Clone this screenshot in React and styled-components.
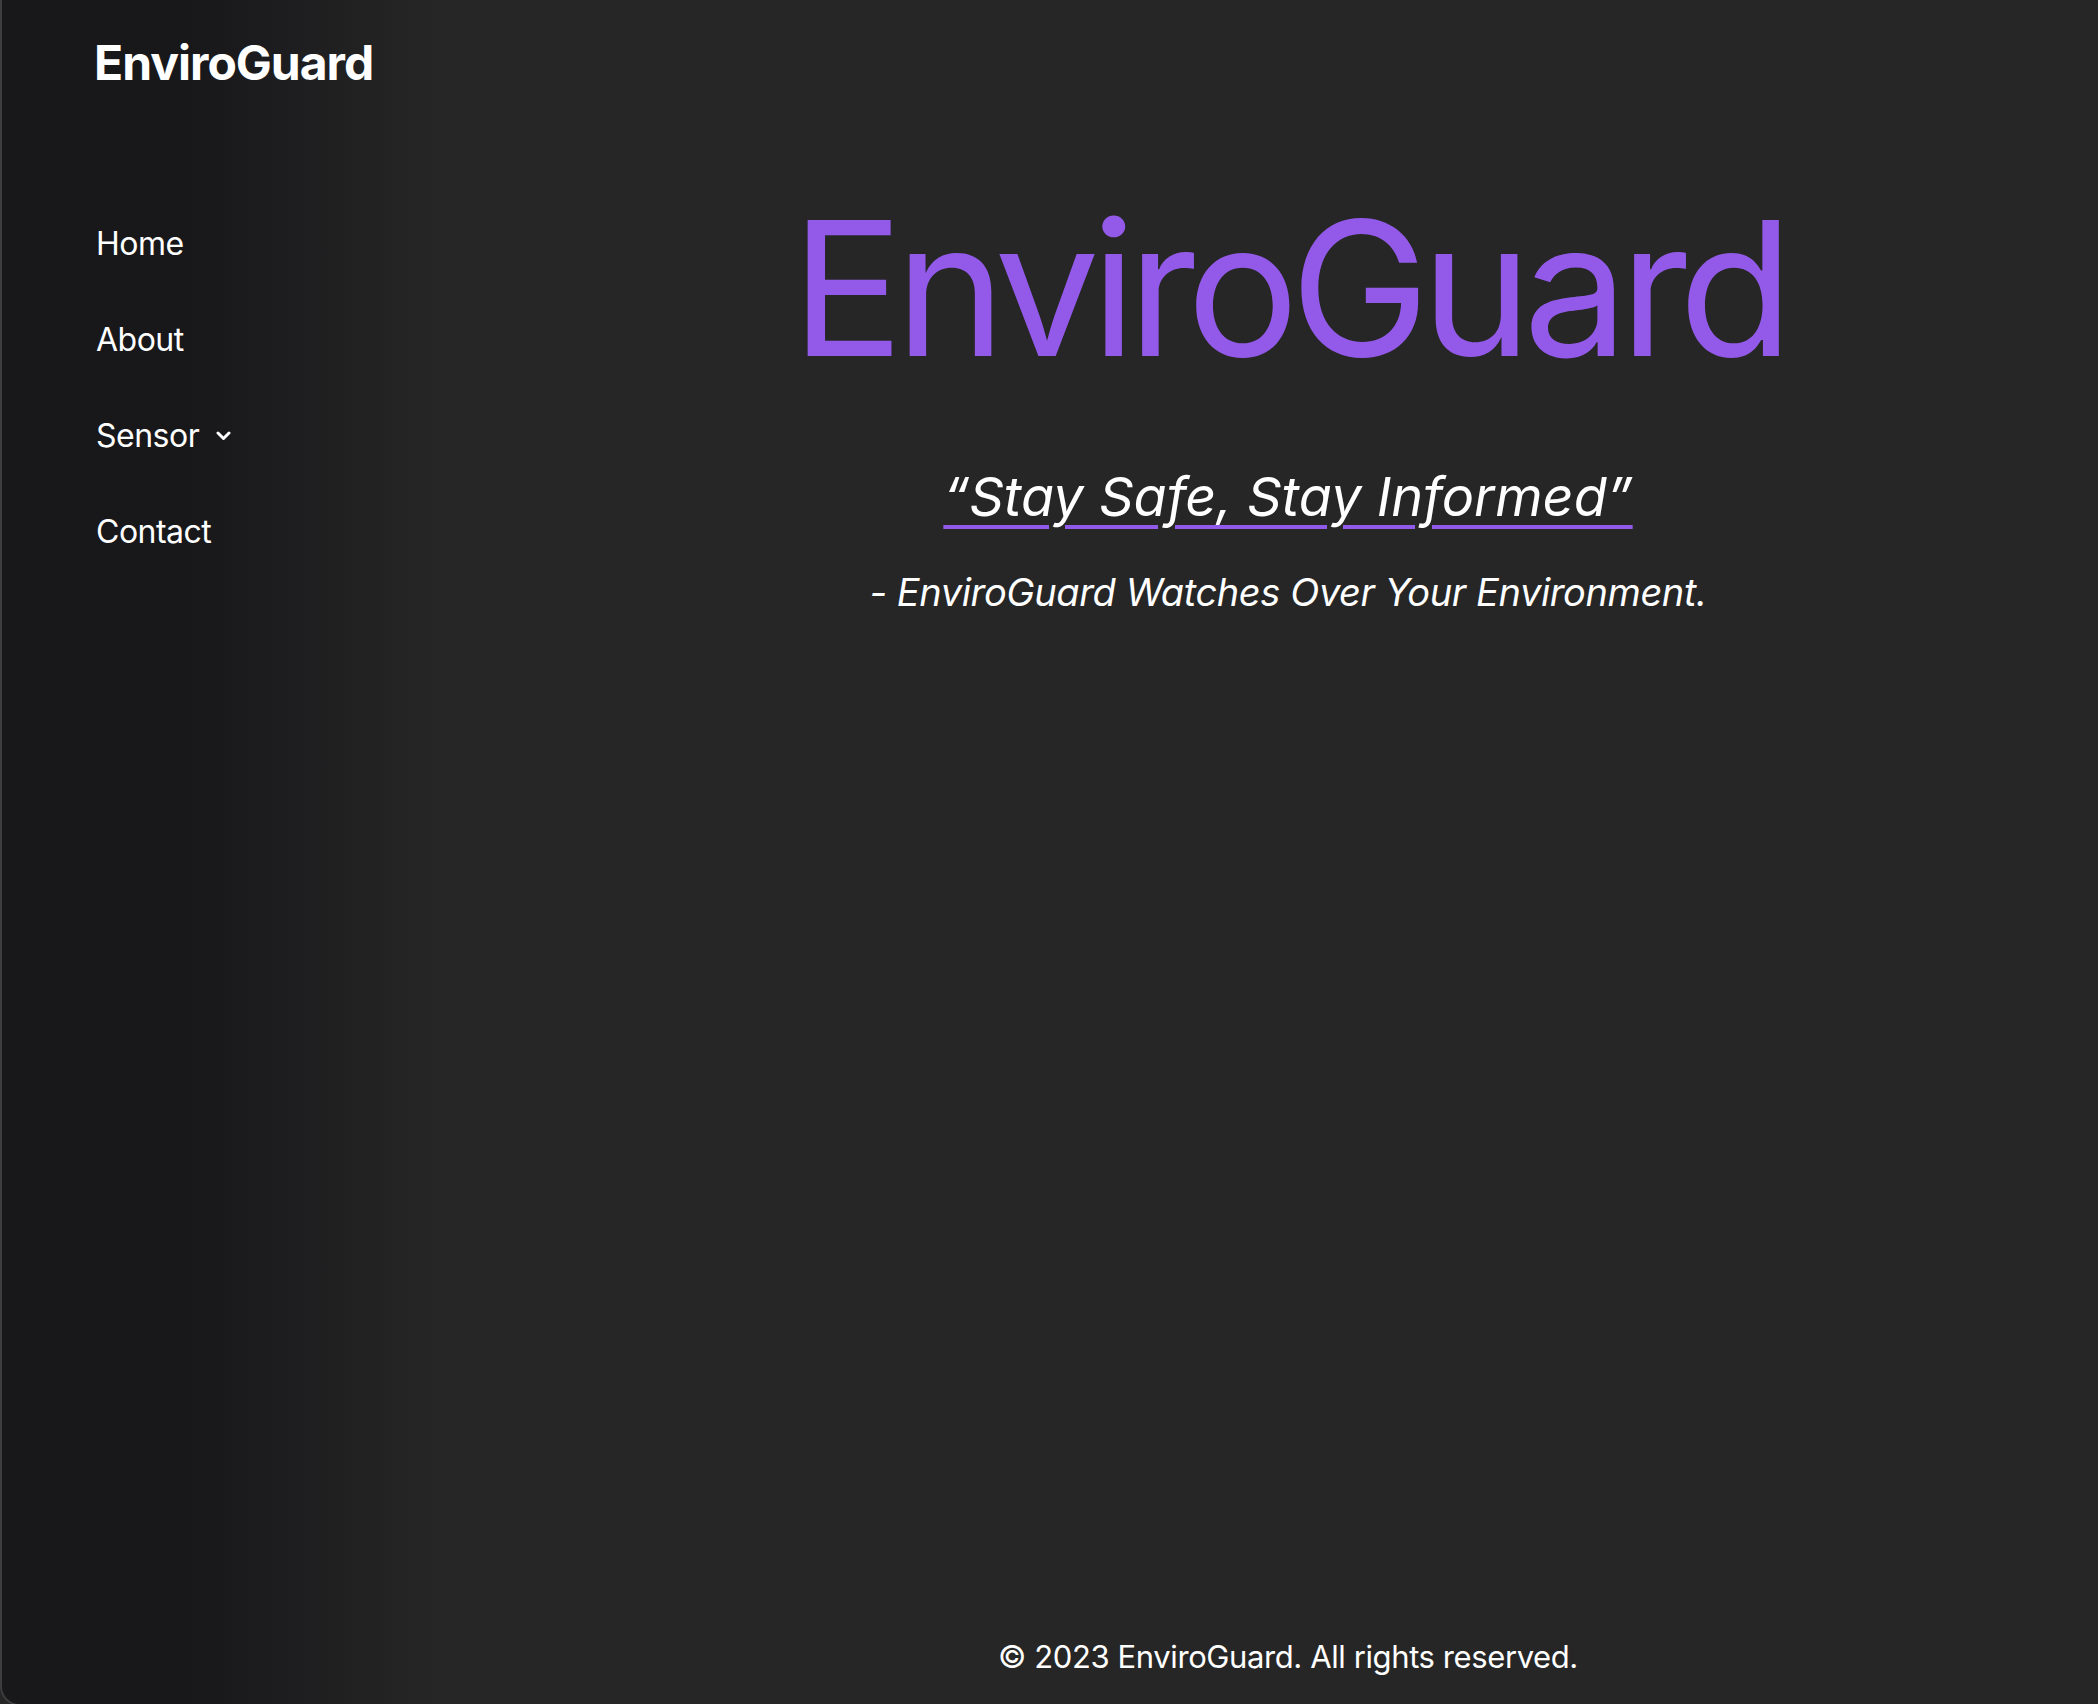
import React from "react";
import styled, { createGlobalStyle } from "styled-components";

const GlobalStyle = createGlobalStyle`
  html, body {
    margin: 0;
    padding: 0;
    background: #262626;
    overflow: hidden;
  }
  body {
    font-family: Inter, "Noto Sans", "Liberation Sans", sans-serif;
    color: #ffffff;
  }
  * {
    box-sizing: border-box;
  }
`;

const Frame = styled.div`
  display: flex;
  min-height: 1706px;
  background: #262626;
  border-left: 2px solid #3d3d3f;
  border-bottom: 2px solid #3d3d3f;
  border-bottom-left-radius: 20px;
  overflow: hidden;
`;

const Sidebar = styled.aside`
  width: 476px;
  flex-shrink: 0;
  padding: 34px 0 0 92px;
  background: linear-gradient(to right, #18181b 0%, #18181b 40%, #262626 92%);
`;

const Logo = styled.div`
  font-size: 48px;
  font-weight: 700;
  line-height: 1.2;
  letter-spacing: -1px;
`;

const Nav = styled.nav`
  display: flex;
  flex-direction: column;
  gap: 57.6px;
  margin-top: 133px;
  padding-left: 2px;
`;

const NavItem = styled.a`
  display: flex;
  align-items: center;
  gap: 17px;
  font-size: 32px;
  line-height: 1.2;
  letter-spacing: -0.5px;
  color: #ffffff;
  text-decoration: none;
  cursor: pointer;
`;

const Main = styled.main`
  flex: 1;
  display: flex;
  flex-direction: column;
  align-items: center;
  padding-top: 176px;
`;

const Title = styled.h1`
  margin: 0;
  font-size: 187px;
  font-weight: 400;
  line-height: 1.2;
  color: #935aea;
  letter-spacing: -8.5px;
`;

const Quote = styled.h2`
  margin: 65px 0 0;
  font-size: 54px;
  font-weight: 400;
  font-style: italic;
  line-height: 1.2;
  text-decoration: underline;
  text-decoration-color: #935aea;
  text-decoration-thickness: 4px;
  text-underline-offset: 9px;
`;

const Tagline = styled.p`
  margin: 40px 0 0;
  font-size: 38px;
  font-style: italic;
  line-height: 1.2;
  letter-spacing: -0.4px;
`;

const Footer = styled.footer`
  margin-top: auto;
  padding-bottom: 29px;
  font-size: 31px;
  line-height: 1.2;
  letter-spacing: -0.4px;
`;

const Chevron = () => (
  <svg width="15" height="10" viewBox="0 0 15 10" fill="none">
    <polyline
      points="2,2 7.5,7.5 13,2"
      stroke="#ffffff"
      strokeWidth="3"
      strokeLinecap="round"
      strokeLinejoin="round"
    />
  </svg>
);

const App = () => {
  return (
    <>
      <GlobalStyle />
      <Frame>
        <Sidebar>
          <Logo>EnviroGuard</Logo>
          <Nav>
            <NavItem>Home</NavItem>
            <NavItem>About</NavItem>
            <NavItem>
              Sensor <Chevron />
            </NavItem>
            <NavItem>Contact</NavItem>
          </Nav>
        </Sidebar>
        <Main>
          <Title>EnviroGuard</Title>
          <Quote>“Stay Safe, Stay Informed”</Quote>
          <Tagline>- EnviroGuard Watches Over Your Environment.</Tagline>
          <Footer>© 2023 EnviroGuard. All rights reserved.</Footer>
        </Main>
      </Frame>
    </>
  );
};

export default App;
